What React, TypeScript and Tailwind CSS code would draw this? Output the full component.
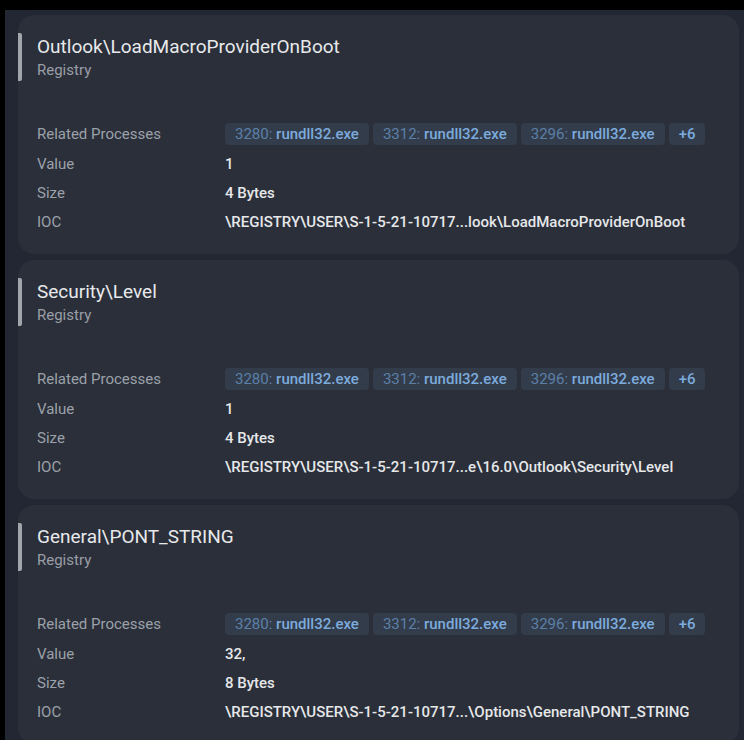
import React from "react";

type Proc = { pid: string; name: string };

type Entry = {
  title: string;
  kind: string;
  value: string;
  size: string;
  ioc: string;
};

const procs: Proc[] = [
  { pid: "3280", name: "rundll32.exe" },
  { pid: "3312", name: "rundll32.exe" },
  { pid: "3296", name: "rundll32.exe" },
];

const entries: Entry[] = [
  {
    title: "Outlook\\LoadMacroProviderOnBoot",
    kind: "Registry",
    value: "1",
    size: "4 Bytes",
    ioc: "\\REGISTRY\\USER\\S-1-5-21-10717...look\\LoadMacroProviderOnBoot",
  },
  {
    title: "Security\\Level",
    kind: "Registry",
    value: "1",
    size: "4 Bytes",
    ioc: "\\REGISTRY\\USER\\S-1-5-21-10717...e\\16.0\\Outlook\\Security\\Level",
  },
  {
    title: "General\\PONT_STRING",
    kind: "Registry",
    value: "32,",
    size: "8 Bytes",
    ioc: "\\REGISTRY\\USER\\S-1-5-21-10717...\\Options\\General\\PONT_STRING",
  },
];

const Chip = ({ children }: { children: React.ReactNode }) => (
  <span className="flex h-[22px] items-center rounded-[4px] bg-[#333c4b] px-[10px] text-[15px] leading-none">
    {children}
  </span>
);

const Row = ({ label, children }: { label: string; children: React.ReactNode }) => (
  <div className="flex items-center">
    <div className="w-[188px] shrink-0 text-[15px] leading-[20px] text-[#9ca1a9]">{label}</div>
    <div className="flex min-w-0 items-center">{children}</div>
  </div>
);

const EntryCard = ({ entry }: { entry: Entry }) => (
  <div className="rounded-[16px] bg-[#2a2f3a] pt-[18px] pb-[22px]">
    {/* header with accent bar */}
    <div className="flex">
      <div className="w-[4px] shrink-0 rounded-r-[2px] bg-[#a2a5ab]" />
      <div className="pl-[15px] pt-[2px]">
        <div className="text-[19px] leading-[24px] text-[#e8e9eb]">{entry.title}</div>
        <div className="text-[15px] leading-[22px] text-[#9a9ea6]">{entry.kind}</div>
      </div>
    </div>

    <div className="mt-[42px] flex flex-col gap-[9px] pl-[19px]">
      <Row label="Related Processes">
        <div className="flex gap-[4px]">
          {procs.map((p) => (
            <Chip key={p.pid}>
              <span className="text-[#5b80a8]">{p.pid}:&nbsp;</span>
              <span className="font-medium text-[#7cabdd]">{p.name}</span>
            </Chip>
          ))}
          <Chip>
            <span className="font-medium text-[#7cabdd]">+6</span>
          </Chip>
        </div>
      </Row>
      <Row label="Value">
        <span className="text-[15px] leading-[20px] font-medium text-[#e6e7e9]">{entry.value}</span>
      </Row>
      <Row label="Size">
        <span className="text-[15px] leading-[20px] font-medium text-[#e6e7e9]">{entry.size}</span>
      </Row>
      <Row label="IOC">
        <span className="whitespace-nowrap text-[15px] leading-[20px] font-medium text-[#e6e7e9]">{entry.ioc}</span>
      </Row>
    </div>
  </div>
);

export default function App() {
  return (
    <div
      className="h-[740px] w-[744px] overflow-hidden bg-black pt-[10px] pl-[5px]"
      style={{ fontFamily: "Roboto, 'Noto Sans', sans-serif" }}
    >
      <div className="h-full bg-[#222733] pt-[5px] pr-[5px] pl-[13px]">
        <div className="flex flex-col gap-[6px]">
          {entries.map((e) => (
            <EntryCard key={e.title} entry={e} />
          ))}
        </div>
      </div>
    </div>
  );
}
